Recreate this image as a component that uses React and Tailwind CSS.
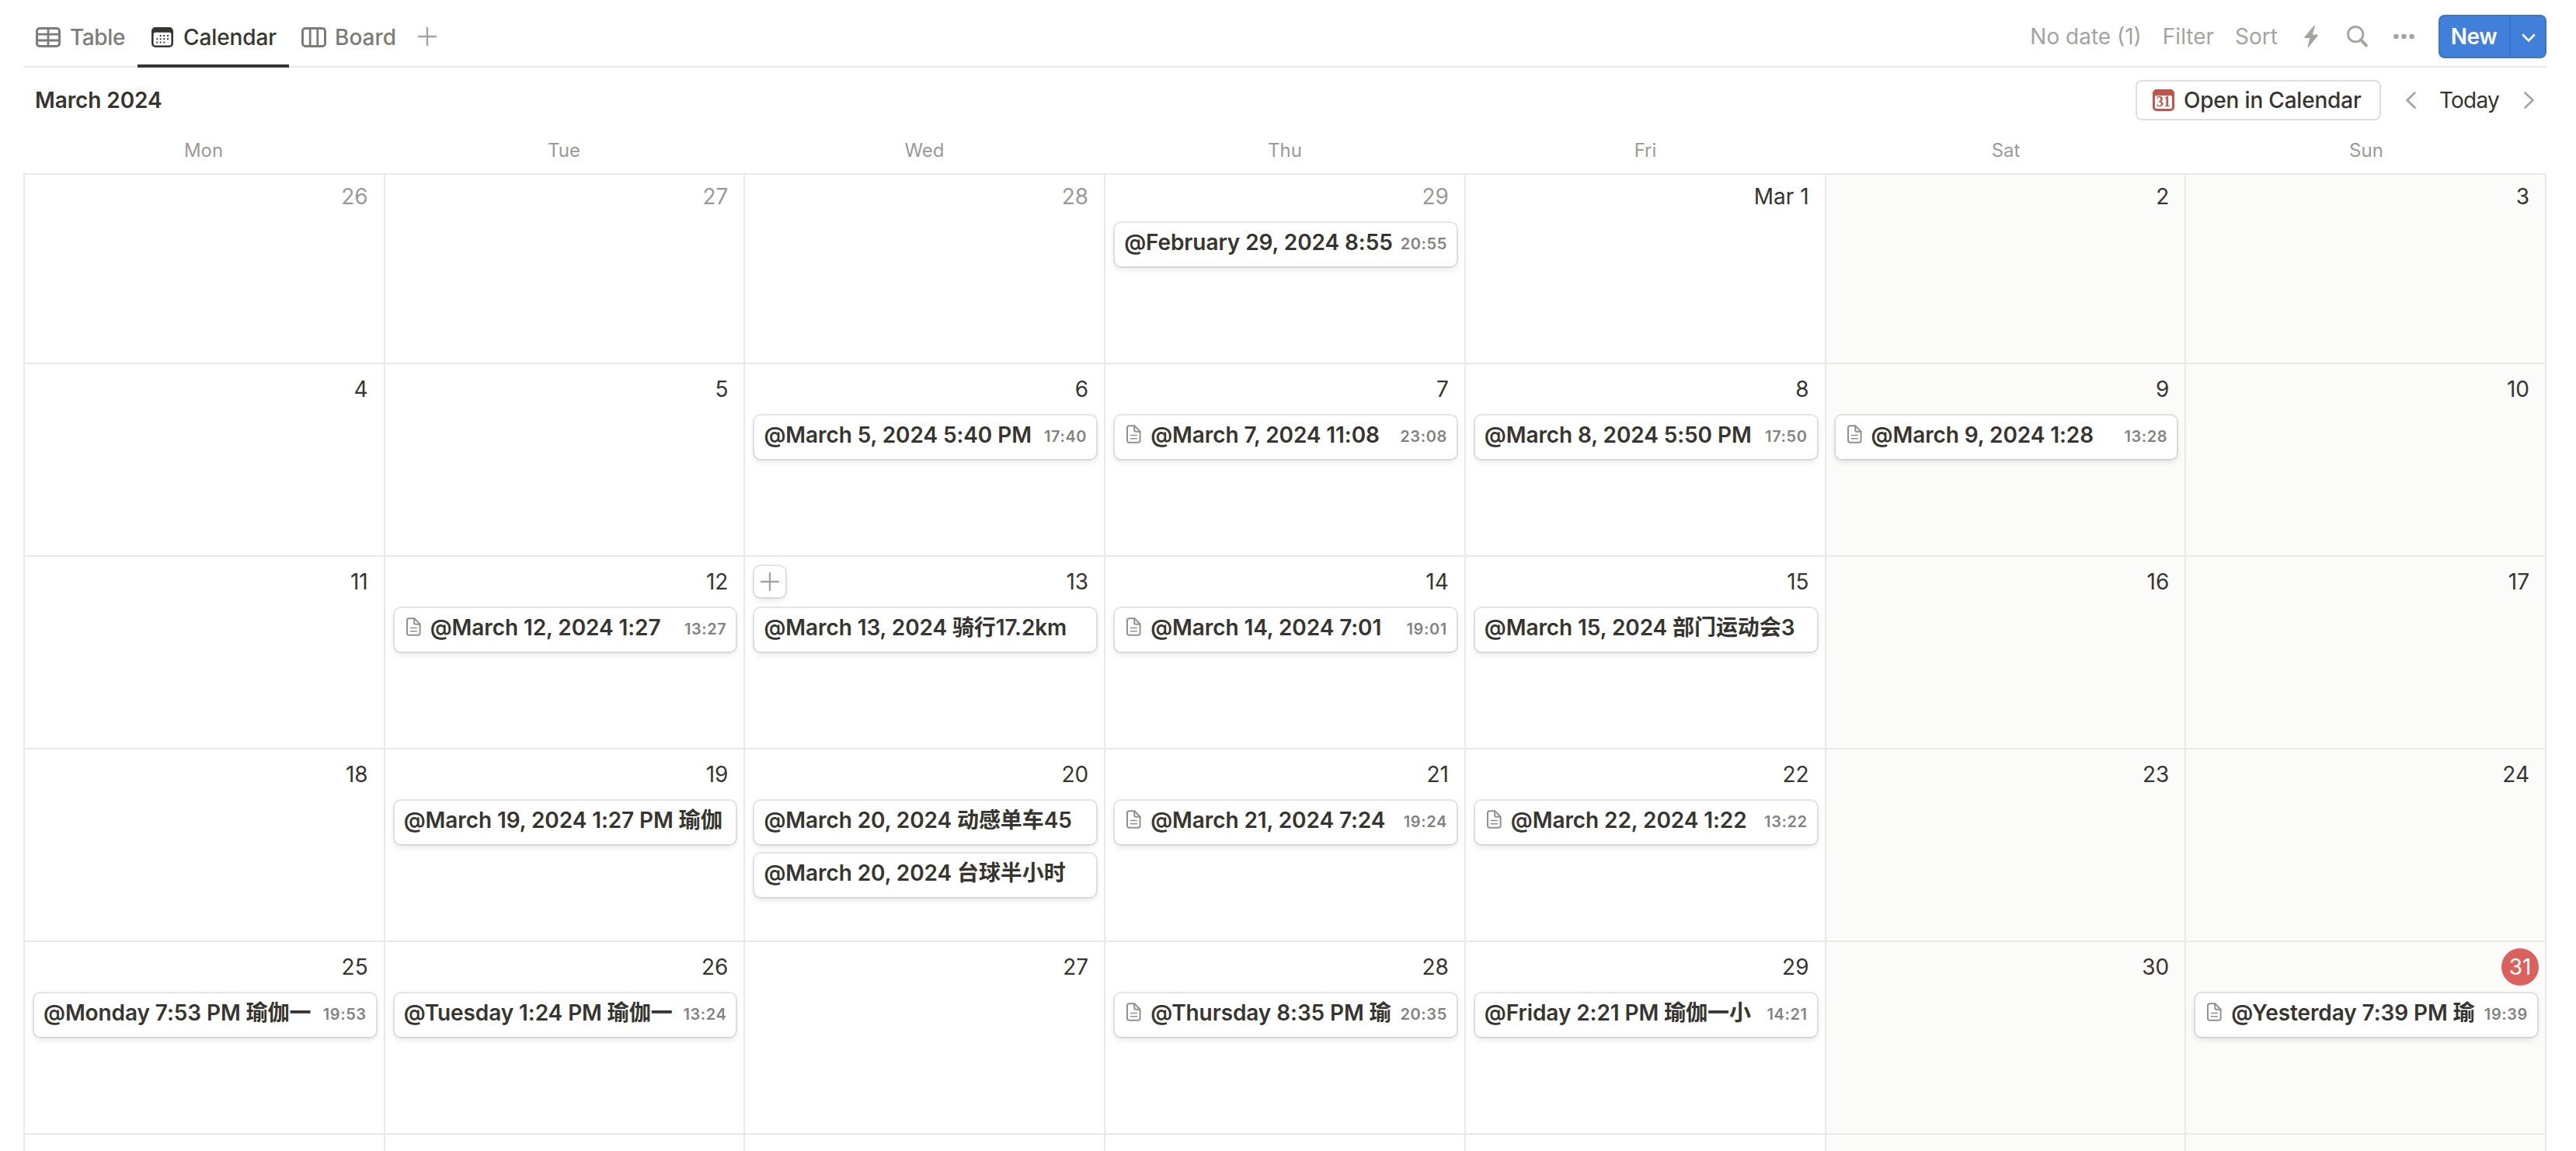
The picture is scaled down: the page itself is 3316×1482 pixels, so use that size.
const WEEKDAYS = ["Mon", "Tue", "Wed", "Thu", "Fri", "Sat", "Sun"];

const WEEKS = [
  [
    { label: "26", muted: true },
    { label: "27", muted: true },
    { label: "28", muted: true },
    { label: "29", muted: true, events: [{ title: "@February 29, 2024 8:55", time: "20:55" }] },
    { label: "Mar 1" },
    { label: "2" },
    { label: "3" },
  ],
  [
    { label: "4" },
    { label: "5" },
    { label: "6", events: [{ title: "@March 5, 2024 5:40 PM", time: "17:40" }] },
    { label: "7", events: [{ title: "@March 7, 2024 11:08", time: "23:08", page: true }] },
    { label: "8", events: [{ title: "@March 8, 2024 5:50 PM", time: "17:50" }] },
    { label: "9", events: [{ title: "@March 9, 2024 1:28", time: "13:28", page: true }] },
    { label: "10" },
  ],
  [
    { label: "11" },
    { label: "12", events: [{ title: "@March 12, 2024 1:27", time: "13:27", page: true }] },
    { label: "13", add: true, events: [{ title: "@March 13, 2024 骑行17.2km" }] },
    { label: "14", events: [{ title: "@March 14, 2024 7:01", time: "19:01", page: true }] },
    { label: "15", events: [{ title: "@March 15, 2024 部门运动会3" }] },
    { label: "16" },
    { label: "17" },
  ],
  [
    { label: "18" },
    { label: "19", events: [{ title: "@March 19, 2024 1:27 PM 瑜伽" }] },
    {
      label: "20",
      events: [{ title: "@March 20, 2024 动感单车45" }, { title: "@March 20, 2024 台球半小时" }],
    },
    { label: "21", events: [{ title: "@March 21, 2024 7:24", time: "19:24", page: true }] },
    { label: "22", events: [{ title: "@March 22, 2024 1:22", time: "13:22", page: true }] },
    { label: "23" },
    { label: "24" },
  ],
  [
    { label: "25", events: [{ title: "@Monday 7:53 PM 瑜伽一", time: "19:53" }] },
    { label: "26", events: [{ title: "@Tuesday 1:24 PM 瑜伽一", time: "13:24" }] },
    { label: "27" },
    { label: "28", events: [{ title: "@Thursday 8:35 PM 瑜", time: "20:35", page: true }] },
    { label: "29", events: [{ title: "@Friday 2:21 PM 瑜伽一小", time: "14:21" }] },
    { label: "30" },
    { label: "31", today: true, events: [{ title: "@Yesterday 7:39 PM 瑜", time: "19:39", page: true }] },
  ],
  [{}, {}, {}, {}, {}, {}, {}],
];

function TableIcon() {
  return (
    <svg width="32" height="26" viewBox="0 0 32 26" fill="none" stroke="currentColor" strokeWidth="3" className="shrink-0">
      <rect x="1.5" y="1.5" width="29" height="23" rx="3.6" />
      <path d="M1.5 9.2h29M1.5 17h29M16 1.5v23" strokeWidth="2.8" />
    </svg>
  );
}

function CalendarIcon() {
  const dots = [
    [11.7, 11], [16.3, 11], [21, 11],
    [7.3, 15.3], [11.7, 15.3], [16.3, 15.3], [21, 15.3],
    [7.3, 19.6], [11.7, 19.6], [16.3, 19.6],
  ];
  return (
    <svg width="28" height="26" viewBox="0 0 28 26" fill="currentColor" className="shrink-0">
      <path fillRule="evenodd" d="M5 0h18a5 5 0 0 1 5 5v16a5 5 0 0 1-5 5H5a5 5 0 0 1-5-5V5a5 5 0 0 1 5-5zM4.6 6.8a2 2 0 0 0-2 2v12.4a2.2 2.2 0 0 0 2.2 2.2h18.4a2.2 2.2 0 0 0 2.2-2.2V8.800a2 2 0 0 0-2-2z" />
      {dots.map(([x, y]) => (
        <rect key={`${x}-${y}`} x={x - 1} y={y - 1} width="2" height="2" rx="0.5" />
      ))}
    </svg>
  );
}

function BoardIcon() {
  return (
    <svg width="32" height="26" viewBox="0 0 32 26" fill="none" stroke="currentColor" strokeWidth="3" className="shrink-0">
      <rect x="1.5" y="1.5" width="29" height="23" rx="3.6" />
      <path d="M11.2 1.5v23M20.8 1.5v23" strokeWidth="2.8" />
    </svg>
  );
}

function PlusIcon() {
  return (
    <svg width="24" height="24" viewBox="0 0 24 24" fill="none" stroke="#a5a4a0" strokeWidth="2.4" strokeLinecap="round" className="shrink-0">
      <path d="M12 1v22M1 12h22" />
    </svg>
  );
}

function BoltIcon() {
  return (
    <svg width="18" height="28" viewBox="0 0 18 28" fill="currentColor" className="shrink-0">
      <path d="M12.3.4.5 14.6c-.6.8-.3 1.4.6 1.4h6.4L4.6 26.7c-.3 1 .7 1.6 1.4.7L17.6 12.9c.6-.8.3-1.5-.6-1.500h-6.200l3-10.200c.3-1-.8-1.600-1.500-.8z" />
    </svg>
  );
}

function SearchIcon() {
  return (
    <svg width="27" height="28" viewBox="0 0 27 28" fill="none" stroke="currentColor" className="shrink-0">
      <circle cx="11.2" cy="11.2" r="9.7" strokeWidth="2.8" />
      <path d="m18.4 18.6 6.6 7" strokeWidth="3.8" strokeLinecap="round" />
    </svg>
  );
}

function DotsIcon() {
  return (
    <svg width="27" height="8" viewBox="0 0 27 8" fill="currentColor" className="shrink-0">
      <circle cx="3.4" cy="4" r="3.3" />
      <circle cx="13.5" cy="4" r="3.3" />
      <circle cx="23.6" cy="4" r="3.3" />
    </svg>
  );
}

function Chevron({ flip }) {
  return (
    <svg width="13" height="22" viewBox="0 0 13 22" fill="none" stroke="#a5a4a0" strokeWidth="2.6" strokeLinecap="round" className="shrink-0">
      <path d={flip ? "M1.5 1.5 11.3 11 1.5 20.5" : "M11.5 1.5 1.7 11l9.8 9.5"} />
    </svg>
  );
}

function DateBookIcon() {
  return (
    <span className="flex h-7 w-7 shrink-0 flex-col rounded-[5px] bg-[#c4554a] px-[3px] pt-2 pb-[3px]">
      <span className="flex h-[17px] items-center justify-center rounded-[2px] bg-white font-['Liberation_Serif',serif] text-[18px] leading-[17px] font-bold text-[#c4554a]">
        31
      </span>
    </span>
  );
}

function PageIcon() {
  return (
    <svg width="19" height="24" viewBox="0 0 19 24" fill="none" stroke="#92918e" strokeWidth="2" strokeLinejoin="round" strokeLinecap="round" className="mt-3 mr-3 ml-[3px] shrink-0">
      <path d="M3.6 1.2h6.8l7.2 7.4v11.6a2.6 2.6 0 0 1-2.6 2.6H3.6A2.6 2.6 0 0 1 1 20.2V3.8a2.6 2.6 0 0 1 2.6-2.6z" />
      <path d="M10.2 1.4v5.4c0 1.200.6 1.900 1.900 1.900h5.300" />
      <path d="M5.4 13.5h8M5.4 17.7h8" strokeWidth="1.5" />
    </svg>
  );
}

function EventCard({ title, time, page }) {
  return (
    <div className="flex h-14 items-start rounded-lg bg-white pr-3 pl-3 shadow-[0_0_0_2px_rgba(15,15,15,0.1),0_4px_8px_rgba(15,15,15,0.1)]">
      {page && <PageIcon />}
      <span className="h-[50px] min-w-0 flex-1 overflow-hidden text-[28px] leading-[50px] font-semibold tracking-[-0.09px] whitespace-nowrap">
        {title}
      </span>
      {time && (
        <span className="pt-[3px] pl-px text-[20px] leading-[48px] font-semibold tracking-[0.6px] text-[#84837f]">{time}</span>
      )}
    </div>
  );
}

function DayCell({ day, first, weekend }) {
  const tone = day.muted ? "text-[#9b9a97]" : "";
  return (
    <div
      className={`flex min-w-0 flex-col border-r-2 border-b-2 border-[#e9e9e7] pr-[10px] pl-3 ${first ? "h-[244px] pt-1" : "h-[248px] pt-2"} ${weekend ? "bg-[#fbfbfa]" : "bg-white"}`}
    >
      <div className="flex h-12 items-center">
        {day.add && (
          <span className="flex h-10 w-10 items-center justify-center rounded-lg bg-white shadow-[0_0_0_2px_rgba(15,15,15,0.1),0_4px_8px_rgba(15,15,15,0.1)]">
            <PlusIcon />
          </span>
        )}
        {day.today ? (
          <span className="-mr-[2px] ml-auto flex h-12 w-12 items-center justify-center rounded-full bg-[#db615c] text-[28px] text-white">
            {day.label}
          </span>
        ) : (
          <span className={`mr-[10px] ml-auto text-[28px] leading-[48px] ${tone}`}>{day.label}</span>
        )}
      </div>
      <div className="mt-[10px] flex flex-col gap-3">
        {(day.events || []).map((event) => (
          <EventCard key={event.title} {...event} />
        ))}
      </div>
    </div>
  );
}

function Toolbar() {
  return (
    <div className="flex h-[87px] shadow-[inset_0_-2px_0_#e9e9e7]">
      <div className="flex text-[28px] font-medium text-[#7d7c78]">
        <div className="flex h-[87px] w-[147px] items-center gap-3 pt-[9px] pl-4">
          <TableIcon />
          <span className="tracking-[-0.4px]">Table</span>
        </div>
        <div className="flex h-[87px] w-[195px] items-center gap-[13px] border-b-4 border-[#37352f] pt-[12px] pl-[18px] text-[#37352f]">
          <CalendarIcon />
          <span className="tracking-[-0.1px]">Calendar</span>
        </div>
        <div className="flex h-[87px] w-[166px] items-center gap-[11px] pt-[9px] pl-4">
          <BoardIcon />
          <span>Board</span>
        </div>
        <div className="flex items-center pt-[7px]">
          <PlusIcon />
        </div>
      </div>
      <div className="ml-auto flex h-[87px] items-center pt-[7px] text-[28px] text-[#a5a4a0]">
        <span>No date (1)</span>
        <span className="ml-[27px]">Filter</span>
        <span className="ml-[27px]">Sort</span>
        <span className="ml-[34px]"><BoltIcon /></span>
        <span className="ml-[37px]"><SearchIcon /></span>
        <span className="ml-[33px]"><DotsIcon /></span>
        <div className="ml-[31px] flex h-14 w-[139px] rounded-lg bg-[#4080db] text-white shadow-[inset_0_0_0_2px_rgba(15,15,15,0.1)]">
          <span className="flex w-[93px] items-center justify-center border-r-2 border-[#3b73c5] font-semibold tracking-[-0.4px]">New</span>
          <span className="flex flex-1 items-center justify-center pt-[3px]">
            <svg width="18" height="12" viewBox="0 0 18 12" fill="none" stroke="currentColor" strokeWidth="2.7">
              <path d="m1.2 1.2 7.8 8.2 7.8-8.2" />
            </svg>
          </span>
        </div>
      </div>
    </div>
  );
}

function MonthBar() {
  return (
    <div className="flex h-[84px] items-center pr-4 pl-[15px] text-[28px]">
      <span className="font-semibold tracking-[-0.1px]">March 2024</span>
      <div className="ml-auto flex h-[52px] w-[316px] items-center rounded-lg border-2 border-[#e0dfde] pl-5 font-medium">
        <DateBookIcon />
        <span className="ml-3 tracking-[-0.2px] whitespace-nowrap">Open in Calendar</span>
      </div>
      <span className="ml-8"><Chevron /></span>
      <span className="ml-[30px] w-[109px] tracking-[-0.8px]">Today</span>
      <Chevron flip />
    </div>
  );
}

export default function App() {
  return (
    <div className="h-[1482px] overflow-hidden bg-white pr-[38px] pl-[30px] font-['Inter','Noto_Sans_CJK_SC',sans-serif] text-[#37352f]">
      <Toolbar />
      <MonthBar />
      <div className="grid h-[52px] grid-cols-7 pb-[7px] text-[24px] text-[#9b9a97]">
        {WEEKDAYS.map((name) => (
          <div key={name} className="flex items-center justify-center">{name}</div>
        ))}
      </div>
      <div className="border-t-2 border-l-2 border-[#e9e9e7]">
        {WEEKS.map((week, w) => (
          <div key={w} className="grid grid-cols-7">
            {week.map((day, d) => (
              <DayCell key={d} day={day} first={w === 0} weekend={d > 4} />
            ))}
          </div>
        ))}
      </div>
    </div>
  );
}
